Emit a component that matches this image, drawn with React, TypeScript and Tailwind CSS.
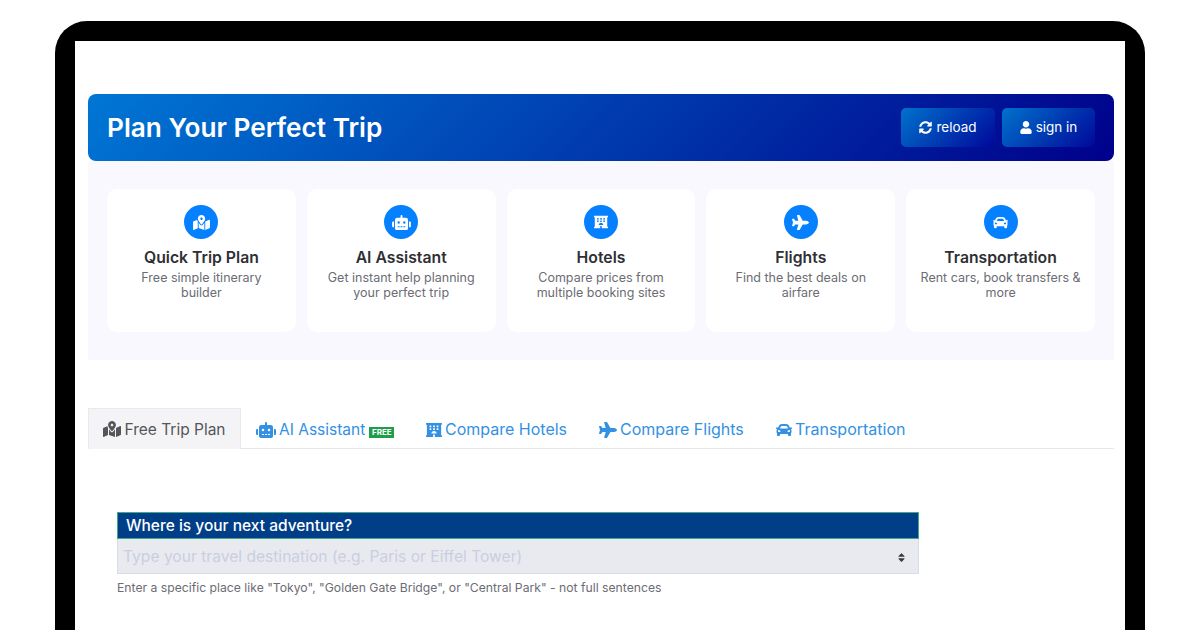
import { FaMapMarkedAlt, FaRobot, FaHotel, FaPlane, FaCar, FaSyncAlt, FaUser, FaSort } from 'react-icons/fa';

const features = [
    { icon: FaMapMarkedAlt, size: 'w-[17px] h-[15px]', title: 'Quick Trip Plan', lines: ['Free simple itinerary', 'builder'] },
    { icon: FaRobot, size: 'w-[19px] h-[15px]', title: 'AI Assistant', lines: ['Get instant help planning', 'your perfect trip'] },
    { icon: FaHotel, size: 'w-[14px] h-[16px]', title: 'Hotels', lines: ['Compare prices from', 'multiple booking sites'] },
    { icon: FaPlane, size: 'w-[17px] h-[15px]', title: 'Flights', lines: ['Find the best deals on', 'airfare'] },
    { icon: FaCar, size: 'w-[15px] h-[15px]', title: 'Transportation', lines: ['Rent cars, book transfers &', 'more'] },
];

const tabs = [
    { icon: FaRobot, size: 'w-[20px] h-[16px]', label: 'AI Assistant', free: true, width: 'w-[170px] text-[15.5px]' },
    { icon: FaHotel, size: 'w-[16px] h-[16px]', label: 'Compare Hotels', free: false, width: 'w-[173px] text-[16px]' },
    { icon: FaPlane, size: 'w-[18px] h-[16px]', label: 'Compare Flights', free: false, width: 'w-[177px] text-[16px]' },
    { icon: FaCar, size: 'w-[16px] h-[16px]', label: 'Transportation', free: false, width: 'w-[160px] text-[16px]' },
];

const App = () => {
    return (
        <div className="w-[1200px] h-[630px] overflow-hidden bg-white font-['Inter',sans-serif] pt-[21px] pl-[55px]">
            <div className="w-[1090px] h-[640px] bg-black rounded-t-[32px] px-[20px] pt-[20px]">
                <div className="h-full bg-white pl-[13px] pr-[11px] pt-[53px]">
                    <header className="h-[67px] rounded-lg bg-[linear-gradient(135deg,#0077d4,#00008b)] flex items-center justify-between pl-[19px] pr-[19px]">
                        <h1 className="text-[26.2px] font-semibold text-white">Plan Your Perfect Trip</h1>
                        <div className="flex gap-[7px]">
                            <button className="w-[94px] h-[39px] rounded-[5px] bg-[linear-gradient(135deg,#0072cc,#00089a)] flex items-center justify-center gap-[4px] text-[13.5px] text-white">
                                <FaSyncAlt className="w-[13px] h-[13px]" /> reload
                            </button>
                            <button className="w-[93px] h-[39px] rounded-[5px] bg-[linear-gradient(135deg,#0072cc,#00089a)] flex items-center justify-center gap-[4px] text-[13.5px] text-white">
                                <FaUser className="w-[12px] h-[13px]" /> sign in
                            </button>
                        </div>
                    </header>

                    <section className="h-[199px] bg-[#f8f8fe] pt-[28px] px-[19px] flex gap-[11px]">
                        {features.map((f) => (
                            <div key={f.title} className="flex-1 h-[143px] bg-white rounded-[10px] pt-[16px] flex flex-col items-center text-center">
                                <div className="w-[34px] h-[34px] rounded-full bg-[#0580ff] flex items-center justify-center text-white">
                                    <f.icon className={f.size} />
                                </div>
                                <h3 className="mt-[7px] text-[15.75px] leading-[24px] font-semibold text-[#2f2f35]">{f.title}</h3>
                                {f.lines.map((l) => (
                                    <p key={l} className="text-[12.5px] leading-[15px] text-[#6c6c74]">{l}</p>
                                ))}
                            </div>
                        ))}
                    </section>

                    <nav className="mt-[48px] h-[41px] flex border-b border-[#e6e6ee] text-[15.5px] leading-[23px]">
                        <div className="w-[153px] h-[41px] bg-[#f4f4f6] border border-b-0 border-[#e8e8ee] flex items-center justify-center gap-[3px] text-[#55555c]">
                            <FaMapMarkedAlt className="w-[18px] h-[16px]" /> Free Trip Plan
                        </div>
                        {tabs.map((t) => (
                            <div key={t.label} className={`${t.width} h-[41px] pt-[2px] flex items-center pl-[15px] gap-[3px] text-[#3391e3]`}>
                                <t.icon className={t.size} /> {t.label}
                                {t.free && (
                                    <span className="mt-[5px] ml-[1px] w-[25px] h-[11px] bg-[#1f9d4d] text-white text-[8px] leading-[11px] font-bold text-center">FREE</span>
                                )}
                            </div>
                        ))}
                    </nav>

                    <form className="mt-[63px] ml-[29px] w-[802px]">
                        <label className="block h-[27px] bg-[#003e87] border border-[#3fa98a] pl-[8px] text-[15.5px] leading-[26px] font-medium text-white">Where is your next adventure?</label>
                        <div className="h-[35px] pt-[2px] bg-[#e9e9f0] border-b border-r border-l border-[#d9dbe8] pl-[5px] pr-[12px] flex items-center justify-between">
                            <span className="text-[15.6px] text-[#c9cfe0]">Type your travel destination (e.g. Paris or Eiffel Tower)</span>
                            <FaSort className="w-[9px] h-[11px] text-[#3a3a40]" />
                        </div>
                        <p className="mt-[5px] text-[12.2px] leading-[18px] text-[#6c6c74]">Enter a specific place like "Tokyo", "Golden Gate Bridge", or "Central Park" - not full sentences</p>
                    </form>
                </div>
            </div>
        </div>
    );
};

export default App;
